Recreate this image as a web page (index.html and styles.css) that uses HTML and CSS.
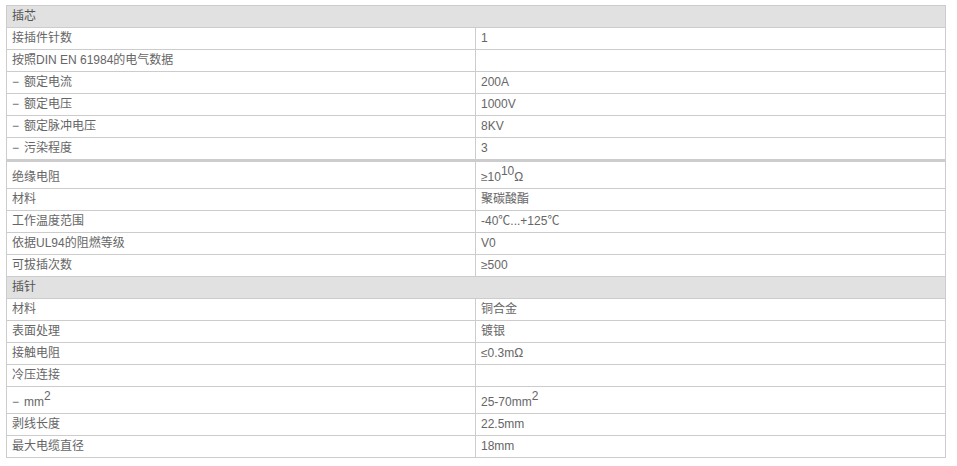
FILE: index.html
```html
<!DOCTYPE html>
<html lang="zh">
<head>
<meta charset="utf-8">
<link rel="stylesheet" href="styles.css">
</head>
<body>
<div class="wrap">
<table class="spec">
  <colgroup><col class="c1"><col class="c2"></colgroup>
  <tr class="head"><td colspan="2">插芯</td></tr>
  <tr><td>接插件针数</td><td>1</td></tr>
  <tr><td>按照DIN EN 61984的电气数据</td><td></td></tr>
  <tr><td><span class="dash">−</span>额定电流</td><td>200A</td></tr>
  <tr><td><span class="dash">−</span>额定电压</td><td>1000V</td></tr>
  <tr><td><span class="dash">−</span>额定脉冲电压</td><td>8KV</td></tr>
  <tr class="thick"><td><span class="dash">−</span>污染程度</td><td>3</td></tr>
  <tr class="tall"><td>绝缘电阻</td><td>≥10<sup>10</sup>Ω</td></tr>
  <tr><td>材料</td><td>聚碳酸酯</td></tr>
  <tr><td>工作温度范围</td><td>-40℃...+125℃</td></tr>
  <tr><td>依据UL94的阻燃等级</td><td>V0</td></tr>
  <tr><td>可拔插次数</td><td>≥500</td></tr>
  <tr class="head"><td colspan="2">插针</td></tr>
  <tr><td>材料</td><td>铜合金</td></tr>
  <tr><td>表面处理</td><td>镀银</td></tr>
  <tr><td>接触电阻</td><td>≤0.3mΩ</td></tr>
  <tr><td>冷压连接</td><td></td></tr>
  <tr class="tall"><td><span class="dash">−</span>mm<sup>2</sup></td><td>25-70mm<sup>2</sup></td></tr>
  <tr><td>剥线长度</td><td>22.5mm</td></tr>
  <tr><td>最大电缆直径</td><td>18mm</td></tr>
</table>
</div>
</body>
</html>
```
FILE: styles.css
```css
html, body {
  margin: 0;
  padding: 0;
  background: #ffffff;
}
.wrap {
  padding: 5px 0 0 6px;
}
.spec {
  border-collapse: collapse;
  width: 940px;
  font-family: "Liberation Sans", "Noto Sans CJK SC", sans-serif;
  font-size: 12px;
  color: #666666;
}
.c1 { width: 469px; }
.spec td {
  border: 1px solid #cccccc;
  height: 21px;
  line-height: 21px;
  padding: 0 0 0 5px;
  vertical-align: middle;
  white-space: nowrap;
}
.dash {
  display: inline-block;
  width: 12px;
}
.spec tr.head td {
  background: #e1e1e1;
  color: #555555;
}
.spec tr.thick td {
  border-bottom: 3px solid #cccccc;
}
.spec tr.tall td {
  height: 26px;
  vertical-align: bottom;
  line-height: 21px;
  padding-bottom: 0;
}
.spec sup {
  font-size: 12px;
  line-height: 0;
  vertical-align: 6px;
}
```
